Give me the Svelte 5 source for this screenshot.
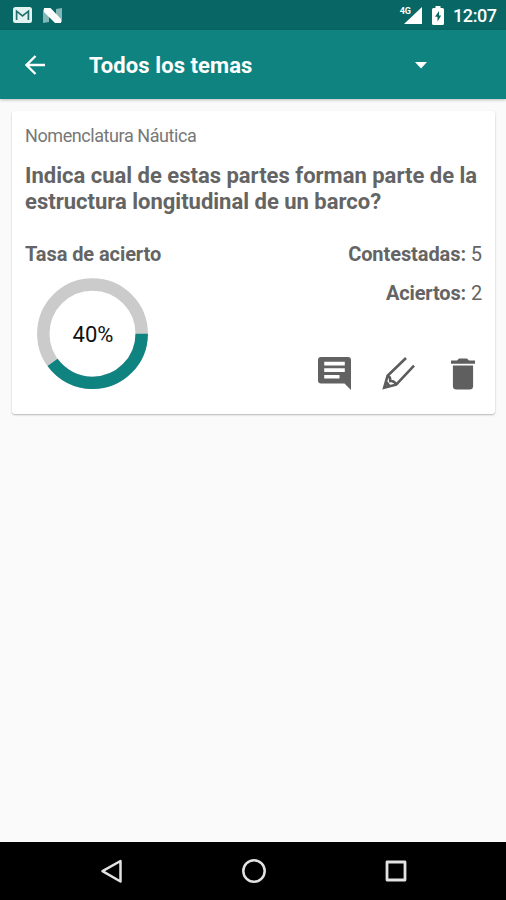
<script>

	let clock = '12:07'
	let title = 'Todos los temas'

	let question = {
		topic: 'Nomenclatura Náutica',
		lines: ['Indica cual de estas partes forman parte de la', 'estructura longitudinal de un barco?'],
		answered: 5,
		correct: 2
	}

	const radius = 49.2
	const circumference = 2 * Math.PI * radius

	$: rate = question.correct / question.answered
	$: percent = Math.round(rate * 100)

</script>

<div class="screen">
	<div class="status">
		<svg class="mail" width="19" height="16" viewBox="0 0 19 16">
			<rect width="19" height="16" rx="2.5" fill="#e4f3f2" />
			<path d="M3.6 13V4.2L9.5 8.8l5.9-4.6V13" fill="none" stroke="#246f6d" stroke-width="1.7" />
		</svg>
		<svg class="nougat" width="19" height="15" viewBox="0 0 19 15">
			<path d="M0 1.500 6 0v14l-6 1zM13 1l6-1v14l-6 1z" fill="#82b9b7" />
			<path d="M1 0h6.500L18 11V15h-6L1 4z" fill="#fff" />
		</svg>
		<div class="right">
			<span class="net">4G</span>
			<svg class="signal" width="18" height="17" viewBox="0 0 18 17">
				<path d="M18 0v17H0z" fill="#fff" />
			</svg>
			<svg class="battery" width="12" height="19" viewBox="0 0 12 19">
				<path d="M3.500 0h5v2h2q1.500 0 1.500 1.500v14q0 1.500-1.500 1.500h-9Q0 19 0 17.500v-14Q0 2 1.500 2h2z" fill="#fff" />
				<path d="M7 5 3 10.800h2.500v4.700l3.700-6H7z" fill="#086765" />
			</svg>
			<span class="clock">{clock}</span>
		</div>
	</div>

	<header>
		<svg class="back" width="20" height="20" viewBox="0 0 20 20">
			<path d="M20 10H2M10.500 1 1.500 10l9 9" fill="none" stroke="#fff" stroke-width="2.300" />
		</svg>
		<h1>{title}</h1>
		<svg class="arrow" width="12" height="7" viewBox="0 0 12 7">
			<path d="M0 0h12L6 6.500z" fill="#fff" />
		</svg>
	</header>

	<main>
		<div class="card">
			<p class="topic">{question.topic}</p>
			<h2>
				{#each question.lines as line}
					<span class="line">{line}</span>
				{/each}
			</h2>

			<div class="stats">
				<div class="rate">
					<h3>Tasa de acierto</h3>
					<svg class="ring" width="112" height="112" viewBox="0 0 112 112">
						<circle cx="55.500" cy="55.700" r={radius} fill="none" stroke="#cbcbcb" stroke-width="12.4" />
						<circle cx="55.500" cy="55.700" r={radius} fill="none" stroke="#0e8380" stroke-width="12.4"
							stroke-dasharray="{circumference * rate} {circumference}" />
						<text x="56" y="63.500" text-anchor="middle">{percent}%</text>
					</svg>
				</div>
				<div class="numbers">
					<p class="answered"><b>Contestadas:</b> {question.answered}</p>
					<p class="correct"><b>Aciertos:</b> {question.correct}</p>
					<div class="actions">
						<svg width="33" height="33" viewBox="0 0 33 33">
							<path d="M3 0h27q3 0 3 3v30l-6.500-6.500H3q-3 0-3-3V3Q0 0 3 0zM6.200 4.800v3.700h20.600V4.800zM6.200 11.300V15h20.600v-3.700zM6.200 17.900v3.700h15.300v-3.700z" fill="#626262" fill-rule="evenodd" />
						</svg>
						<svg width="34" height="34" viewBox="0 0 34 34">
							<path d="M24 2 5.600 19.800 2.200 31.600l12-2.900L32 9.700M5.600 19.800q3 1 2.700 5.200 4.200-.5 5.900 3.700M2.400 31.400l2-5.300 3 4z" fill="none" stroke="#5c5c5c" stroke-width="2.600" />
						</svg>
						<svg width="24" height="33" viewBox="0 0 24 33">
							<path d="M0 3.500h6l2-2h8l2 2h6v3.300H0zM1.900 8.500h20.200v20.500q0 3.500-3.500 3.500H5.400q-3.500 0-3.500-3.500z" fill="#5f5f5f" />
						</svg>
					</div>
				</div>
			</div>
		</div>
	</main>

	<nav>
		<svg width="26" height="26" viewBox="0 0 26 26">
			<path d="M21.500 3v20.500L3.500 13.200z" fill="none" stroke="#e2e2e2" stroke-width="2.500" stroke-linejoin="round" />
		</svg>
		<svg width="26" height="26" viewBox="0 0 26 26">
			<circle cx="13" cy="13" r="10.700" fill="none" stroke="#e2e2e2" stroke-width="2.500" />
		</svg>
		<svg width="26" height="26" viewBox="0 0 26 26">
			<rect x="4" y="4" width="18" height="18" fill="none" stroke="#e2e2e2" stroke-width="2.800" stroke-linejoin="round" />
		</svg>
	</nav>
</div>

<style>

	:global(body) {
		background-color: #fafafa;
	}

	.screen {
		display: flex;
		flex-direction: column;
		width: 506px;
		height: 900px;
		overflow: hidden;
		background-color: #fafafa;
		color: #646464;
		font-family: Roboto, sans-serif;
	}

	svg {
		display: block;
		flex: none;
	}

	h1, h2, h3, p {
		margin: 0;
		white-space: nowrap;
	}

	.status {
		display: flex;
		height: 30px;
		padding: 0 10px 0 13px;
		background-color: #086765;
		color: white;
	}

	.mail {
		margin-top: 7px;
	}

	.nougat {
		margin: 8px 0 0 11px;
	}

	.right {
		display: flex;
		margin-left: auto;
	}

	.net {
		margin: 6px -7px 0 0;
		font-size: 9px;
		line-height: 10px;
		font-weight: 700;
	}

	.signal {
		margin-top: 7px;
	}

	.battery {
		margin: 6px 0 0 10px;
	}

	.clock {
		width: 43px;
		margin-left: 9px;
		font-size: 18px;
		line-height: 32px;
		font-weight: 500;
		letter-spacing: -.4px;
		white-space: nowrap;
	}

	header {
		display: flex;
		align-items: center;
		height: 69px;
		padding: 0 79px 0 25px;
		background-color: #0e8380;
		color: white;
		box-shadow: 0 1px 3px rgba(0, 0, 0, .25);
	}

	h1 {
		margin: 2px 0 0 44px;
		font-size: 22px;
		line-height: 28px;
		font-weight: 700;
		letter-spacing: .08px;
	}

	.arrow {
		margin: 1px 0 0 auto;
	}

	main {
		flex: 1;
		padding: 12px 11px 0 12px;
	}

	.card {
		height: 303px;
		padding: 13px 13px 0;
		box-sizing: border-box;
		border-radius: 3px;
		background-color: white;
		box-shadow: 0 1px 2px rgba(0, 0, 0, .28);
	}

	.topic {
		font-size: 18px;
		line-height: 24px;
		letter-spacing: -.42px;
		color: #777;
	}

	h2 {
		margin-top: 15px;
		font-size: 22px;
		line-height: 26px;
		font-weight: 700;
	}

	.line {
		display: block;
	}

	.stats {
		display: flex;
		justify-content: space-between;
		margin-top: 26px;
	}

	h3, .numbers p {
		font-size: 20px;
		line-height: 26px;
		letter-spacing: -.08px;
	}

	h3 {
		font-weight: 700;
	}

	.ring {
		margin: 11px 0 0 12px;
	}

	.ring text {
		font-size: 22px;
		fill: #111;
	}

	.numbers {
		display: flex;
		flex-direction: column;
		align-items: flex-end;
	}

	.numbers .correct {
		margin-top: 13px;
		letter-spacing: -.15px;
	}

	.actions {
		display: flex;
		align-items: center;
		margin: 50px 7px 0 0;
		gap: 31px;
	}

	.actions svg:last-child {
		margin-left: 4px;
	}

	nav {
		display: flex;
		justify-content: center;
		align-items: center;
		gap: 116px;
		height: 58px;
		padding-left: 1px;
		background-color: black;
	}
</style>
